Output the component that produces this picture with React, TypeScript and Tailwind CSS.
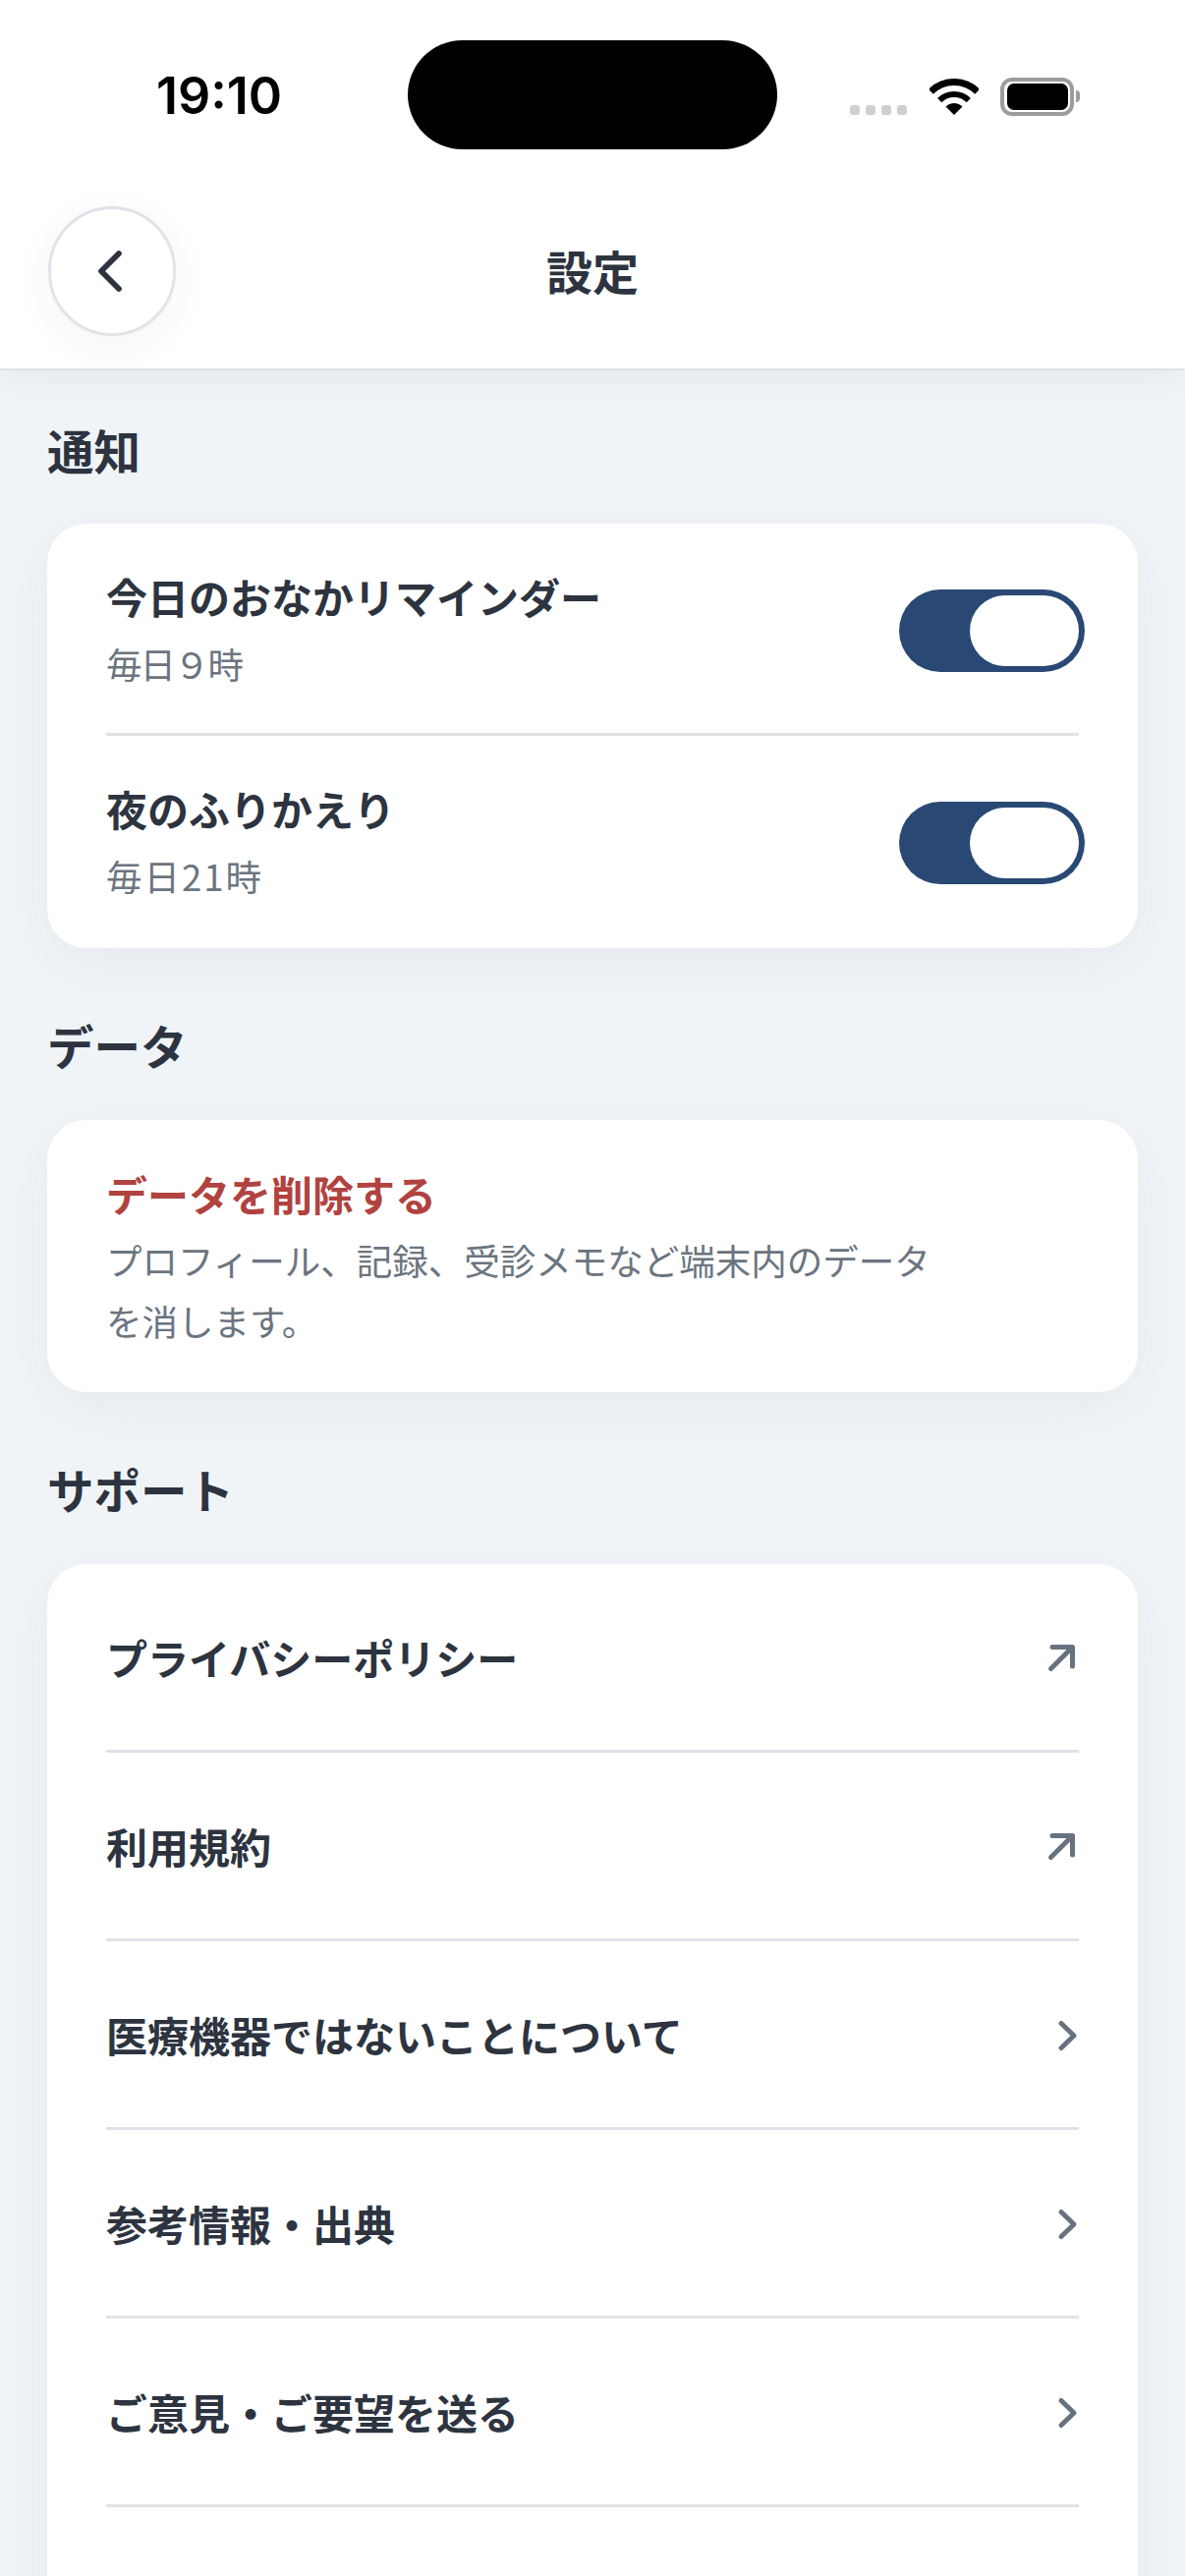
import { ChevronLeft } from "lucide-react";

function ExternalIcon() {
  return (
    <svg width="48" height="48" viewBox="0 0 48 48" fill="none" stroke="#667280" strokeWidth="5" strokeLinecap="round" strokeLinejoin="round">
      <path d="M21 13.5h20.5V33" />
      <path d="M41 14 19.5 35.5" />
    </svg>
  );
}

function ChevronIcon() {
  return (
    <svg width="48" height="48" viewBox="0 0 48 48" fill="none" stroke="#667280" strokeWidth="5" strokeLinecap="round" strokeLinejoin="round">
      <path d="M30 12.5 43 25 30 37.5" />
    </svg>
  );
}

function Toggle() {
  return (
    <div className="flex h-[84px] w-[189px] shrink-0 items-center justify-end rounded-full bg-[#294974] pr-[6px]">
      <div className="h-[72px] w-[111px] rounded-full bg-white" />
    </div>
  );
}

function Divider() {
  return <div className="mx-[60px] h-[3px] bg-[#dfe3e8]" />;
}

function SectionTitle({ children }: { children: string }) {
  return <h2 className="mb-[44px] mt-[67px] text-[47.5px] font-bold leading-[64px] text-[#2d3440]">{children}</h2>;
}

function ToggleRow({ title, sub, subClass }: { title: string; sub: string; subClass: string }) {
  return (
    <div className="flex items-center justify-between pb-[40px] pl-[60px] pr-[54px] pt-[44px]">
      <div>
        <div className="text-[42px] font-bold leading-[60px] text-[#2d3440]">{title}</div>
        <div className={`mt-[9px] text-[36.5px] leading-[60px] text-[#6b7580] ${subClass}`}>{sub}</div>
      </div>
      <Toggle />
    </div>
  );
}

function LinkRow({ title, external }: { title: string; external?: boolean }) {
  return (
    <div className="flex h-[189px] items-center justify-between px-[60px]">
      <span className="text-[42px] font-bold text-[#2d3440]">{title}</span>
      {external ? <ExternalIcon /> : <ChevronIcon />}
    </div>
  );
}

export default function App() {
  return (
    <div className="h-screen overflow-hidden bg-[#f0f4f7] font-['Noto_Sans_CJK_JP','Noto_Sans',sans-serif]">
      {/* Header */}
      <header className="border-b-[2px] border-[#dde2e7] bg-white shadow-[0_8px_40px_rgba(40,60,90,0.06)]">
        <div className="flex items-center pt-[41px]">
          <div className="w-[415px] pl-[159px] pt-[2px] font-['Inter',sans-serif] text-[52px] font-semibold leading-[109px] text-black">
            19:10
          </div>
          <div className="h-[111px] w-[376px] rounded-full bg-black" />
          <div className="flex flex-1 items-end pb-[34px] pl-[74px] pt-[37px]">
            <div className="mb-[1px] flex gap-[6px]">
              <div className="h-[10px] w-[10px] rounded-[3px] bg-[#cfcfcf]" />
              <div className="h-[10px] w-[10px] rounded-[3px] bg-[#cfcfcf]" />
              <div className="h-[10px] w-[10px] rounded-[3px] bg-[#cfcfcf]" />
              <div className="h-[10px] w-[10px] rounded-[3px] bg-[#cfcfcf]" />
            </div>
            <svg className="ml-[23px]" width="50" height="38" viewBox="0 0 50 38">
              <path d="M1.3 13.3A33.5 33.5 0 0 1 48.7 13.3" fill="none" stroke="#000" strokeWidth="7" />
              <path d="M10.2 22.2A21 21 0 0 1 39.8 22.2" fill="none" stroke="#000" strokeWidth="6" />
              <path d="M25 37 16.5 28.5A12 12 0 0 1 33.5 28.5Z" fill="#000" />
            </svg>
            <div className="ml-[22px] flex items-center">
              <div className="flex h-[39px] w-[75px] items-center justify-center rounded-[12px] border-[4px] border-[#9c9c9c]">
                <div className="h-[27px] w-[62px] rounded-[7px] bg-black" />
              </div>
              <div className="ml-[2px] h-[12px] w-[4px] rounded-r-full bg-[#9c9c9c]" />
            </div>
          </div>
        </div>
        <div className="relative mt-[58px] flex h-[132px] items-center justify-center">
          <button className="absolute left-[49px] flex h-[132px] w-[130px] items-center justify-center rounded-full border-[3px] border-[#dfe4e9] bg-white shadow-[0_10px_40px_rgba(40,60,90,0.05)]">
            <ChevronLeft size={72} strokeWidth={1.9} className="mr-[5px] text-[#2d3440]" />
          </button>
          <h1 className="mb-[2px] text-[47px] font-bold text-[#2d3440]">設定</h1>
        </div>
        <div className="h-[33px]" />
      </header>

      <main className="px-[48px]">
        <h2 className="mb-[43px] mt-[49px] text-[47.5px] font-bold leading-[64px] text-[#2d3440]">通知</h2>
        <section className="rounded-[40px] bg-white pb-[3px] shadow-[0_16px_64px_rgba(40,60,90,0.05)]">
          <ToggleRow title="今日のおなかリマインダー" sub="毎日９時" subClass="tracking-[-2px]" />
          <Divider />
          <ToggleRow title="夜のふりかえり" sub="毎日21時" subClass="tracking-[2px]" />
        </section>

        <SectionTitle>データ</SectionTitle>
        <section className="rounded-[40px] bg-white pb-[41px] pl-[60px] pr-[60px] pt-[45px] shadow-[0_16px_64px_rgba(40,60,90,0.05)]">
          <div className="text-[42px] font-bold leading-[60px] text-[#b04340]">データを削除する</div>
          <p className="mt-[7px] max-w-[850px] text-[36.5px] leading-[62px] text-[#6b7580]">
            プロフィール、記録、受診メモなど端末内のデータを消します。
          </p>
        </section>

        <SectionTitle>サポート</SectionTitle>
        <section className="rounded-[40px] bg-white pb-[300px] shadow-[0_16px_64px_rgba(40,60,90,0.05)]">
          <LinkRow title="プライバシーポリシー" external />
          <Divider />
          <LinkRow title="利用規約" external />
          <Divider />
          <LinkRow title="医療機器ではないことについて" />
          <Divider />
          <LinkRow title="参考情報・出典" />
          <Divider />
          <LinkRow title="ご意見・ご要望を送る" />
          <Divider />
        </section>
      </main>
    </div>
  );
}
